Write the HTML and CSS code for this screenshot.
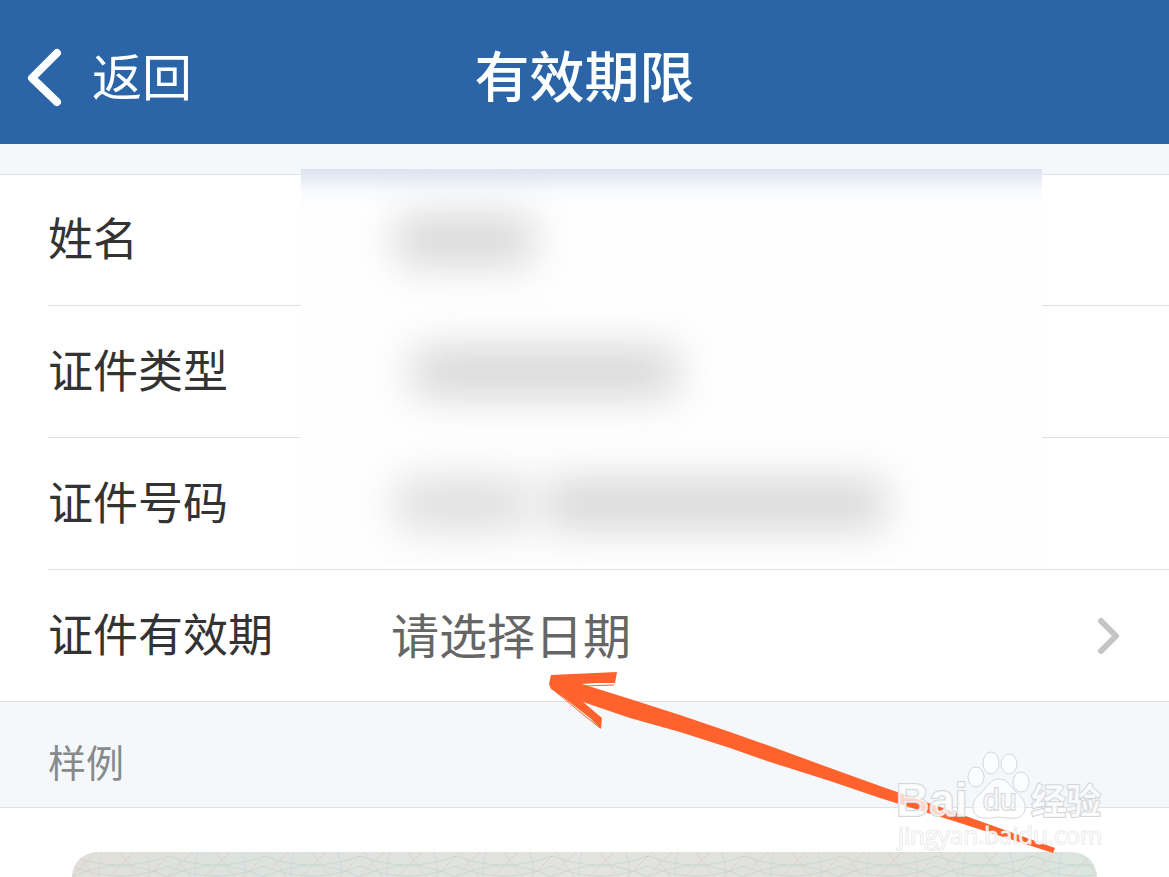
FILE: index.html
```html
<!DOCTYPE html>
<html lang="zh-CN">
<head>
<meta charset="utf-8">
<meta name="viewport" content="width=device-width, initial-scale=1">
<title>有效期限</title>
<link rel="stylesheet" href="styles.css">
</head>
<body>
<div class="page">
  <header class="navbar">
    <button class="back" type="button">
      <svg class="back-icon" viewBox="0 0 36 60" aria-hidden="true"><path d="M30 5 L5 30 L30 54" /></svg>
      <span>返回</span>
    </button>
    <h1 class="title">有效期限</h1>
  </header>

  <main class="content">
    <section class="form">
      <div class="row"><span class="label">姓名</span></div>
      <div class="row"><span class="label">证件类型</span></div>
      <div class="row"><span class="label">证件号码</span></div>
      <div class="row">
        <label class="label" for="expiry">证件有效期</label>
        <button class="picker" id="expiry" type="button">
          <span>请选择日期</span>
          <svg class="chevron" viewBox="0 0 24 40" aria-hidden="true"><path d="M4 5 L19 20 L4 35" /></svg>
        </button>
      </div>
      <div class="mask" aria-hidden="true">
        <div class="mask-line"><i class="smudge smudge-name"></i></div>
        <div class="mask-line"><i class="smudge smudge-type"></i></div>
        <div class="mask-line"><i class="smudge smudge-id"></i><i class="smudge smudge-id-end"></i></div>
      </div>
    </section>

    <h2 class="section-title">样例</h2>
    <section class="sample">
      <div class="card">
        <svg class="card-texture" width="100%" height="100%" aria-hidden="true">
          <defs>
            <linearGradient id="tint">
              <stop offset="0" stop-color="#e2dfda" />
              <stop offset="0.15" stop-color="#dde2de" />
              <stop offset="0.5" stop-color="#e3e3df" />
              <stop offset="0.8" stop-color="#e0e0db" />
              <stop offset="1" stop-color="#dbe5e0" />
            </linearGradient>
            <pattern id="waves" width="96" height="48" patternUnits="userSpaceOnUse">
              <path d="M0 4 Q48 22 96 4 M0 14 Q48 34 96 14 M0 25 Q48 2 96 25 M0 38 Q48 12 96 38" stroke="#b9d2cc" />
              <path d="M0 24 L24 0 M14 48 L62 0 M52 48 L96 4 M4 0 L40 48 M48 0 L84 48" stroke="#d6c8bf" />
              <path d="M30 0 Q22 24 34 48 M74 0 Q82 24 70 48" stroke="#c3d3d2" />
            </pattern>
          </defs>
          <rect width="100%" height="100%" fill="url(#tint)" />
          <rect class="waves" width="100%" height="100%" fill="url(#waves)" />
        </svg>
      </div>
    </section>
  </main>

  <svg class="arrow" viewBox="0 0 520 190" aria-hidden="true">
    <path d="M7 3 L73 0 L71 11 L52 11 L38 12 L86 27 L136 43 L186 60 L226 74 L286 96 L336 114 L416 142 L511 176 L509 181 L416 151 L336 126 L286 109 L226 90 L186 76 L136 60 L86 46 L39 30 L58 46 L57 57 L46 46 L19 25 L7 17 L5 12 Z" />
    <path class="bristle" d="M40 14 L70 13 M12 20 L36 40 L56 56" />
  </svg>

  <svg class="watermark" viewBox="0 0 220 104" role="img" aria-label="Baidu 经验 jingyan.baidu.com">
    <ellipse cx="83" cy="36" rx="8" ry="10" />
    <ellipse cx="98" cy="22" rx="8" ry="11" />
    <ellipse cx="116" cy="23" rx="8" ry="10" />
    <ellipse cx="128" cy="41" rx="8" ry="10" />
    <path d="M106 38 C98 38 95 45 89 51 C83 56 79 61 80 68 C82 79 92 78 106 76 C120 78 130 79 132 68 C133 60 128 56 123 51 C117 45 114 38 106 38 Z" />
    <text class="wm-brand" x="3" y="75">Bai</text>
    <text class="wm-du" x="90" y="69">du</text>
    <text class="wm-cjk" x="138" y="73">经验</text>
    <text class="wm-url" x="5" y="103">jingyan.baidu.com</text>
  </svg>
</div>
</body>
</html>
```
FILE: styles.css
```css
* {
  box-sizing: border-box;
}

body {
  margin: 0;
  background: #fff;
  color: #333;
  font-family: "Noto Sans CJK SC", sans-serif;
}

button {
  padding: 0;
  border: 0;
  background: none;
  color: inherit;
  font: inherit;
  cursor: pointer;
}

.page {
  position: relative;
  display: flex;
  flex-direction: column;
  height: 100vh;
  min-height: 860px;
  overflow: hidden;
}

.navbar {
  display: grid;
  flex-shrink: 0;
  grid-template-columns: 1fr auto 1fr;
  align-items: center;
  height: 144px;
  padding: 12px 27px 0;
  background: #2b65a8;
  color: #fcffff;
}

.back {
  display: flex;
  align-items: center;
  gap: 29px;
  font-size: 50px;
  line-height: 72px;
}

.back-icon {
  width: 36px;
  height: 60px;
  fill: none;
  stroke: currentColor;
  stroke-width: 8;
  stroke-linecap: round;
  stroke-linejoin: round;
}

.back span {
  padding-bottom: 8px;
  font-weight: 400;
}

.title {
  margin: 0;
  padding-bottom: 10px;
  font-size: 55px;
  font-weight: 500;
  line-height: 72px;
}

.content {
  display: flex;
  flex: 1;
  flex-direction: column;
  min-height: 0;
  padding-top: 30px;
  background: #f4f8fa;
}

.form {
  position: relative;
  flex-shrink: 0;
  border-top: 1px solid #dfe3e6;
  border-bottom: 1px solid #dcdfe2;
  padding-left: 48px;
  background: #fff;
}

.row {
  display: flex;
  align-items: center;
  height: 132px;
}

.row:nth-child(-n + 3) {
  border-bottom: 1px solid #dfe0e2;
}

.row:first-child,
.row:nth-child(4) {
  height: 131px;
}

.label {
  width: 343px;
  padding-bottom: 6px;
  font-size: 45px;
  line-height: 66px;
}

.picker {
  display: flex;
  flex: 1;
  align-items: center;
  justify-content: space-between;
  padding-right: 48px;
  color: #666;
  font-size: 48px;
  line-height: 66px;
}

.picker span {
  padding-bottom: 6px;
}

.chevron {
  width: 24px;
  height: 40px;
  fill: none;
  stroke: #c5c5c5;
  stroke-width: 6;
  stroke-linecap: round;
  stroke-linejoin: round;
}

.mask {
  position: absolute;
  top: -6px;
  left: 301px;
  width: 741px;
  height: 396px;
  padding-top: 5px;
  overflow: hidden;
  background: linear-gradient(#dbe3ee 0, #e7ecf6 10px, #f8fafd 22px, #fefefe 36px);
}

.mask-line {
  display: flex;
  align-items: center;
  gap: 16px;
  height: 132px;
  padding-left: 96px;
}

.smudge {
  height: 48px;
  border-radius: 12px;
  background: #d6d6d6;
  filter: blur(20px);
}

.smudge-name {
  width: 136px;
}

.smudge-type {
  width: 264px;
  margin-left: 16px;
}

.smudge-id {
  width: 132px;
  background: #dcdcdc;
}

.smudge-id-end {
  width: 340px;
}

.section-title {
  flex-shrink: 0;
  margin: 0;
  padding: 30px 48px 18px;
  border-bottom: 1px solid #dfe2e4;
  color: #868a8b;
  font-size: 38px;
  font-weight: 400;
  line-height: 57px;
}

.sample {
  display: flex;
  flex: 1;
  min-height: 0;
  padding: 44px 72px 0;
  background: #fff;
}

.card {
  flex: 1;
  overflow: hidden;
  border-radius: 36px 36px 0 0;
}

.card-texture {
  display: block;
  height: 240px;
}

.waves {
  opacity: 0.6;
}

.card-texture path {
  fill: none;
}

.arrow {
  position: absolute;
  top: 672px;
  left: 544px;
  width: 520px;
  height: 190px;
  fill: #ff622d;
  pointer-events: none;
}

.bristle {
  fill: none;
  stroke: #ff622d;
  stroke-width: 1;
}

.watermark {
  position: absolute;
  top: 741px;
  right: 56px;
  width: 220px;
  height: 104px;
  overflow: visible;
  fill: rgba(255, 255, 255, 0.75);
  stroke: #d5d7da;
  stroke-width: 1;
  pointer-events: none;
}

.watermark text {
  paint-order: stroke;
  stroke-width: 2;
}

.wm-brand {
  font: bold 46px "Liberation Sans", sans-serif;
}

.wm-du {
  font: 30px "Liberation Sans", sans-serif;
}

.wm-cjk {
  font: bold 35px "Noto Sans CJK SC", sans-serif;
}

.watermark .wm-url {
  font: 24px "Open Sans", sans-serif;
  stroke: #dfe1e3;
  stroke-width: 1;
}
```
